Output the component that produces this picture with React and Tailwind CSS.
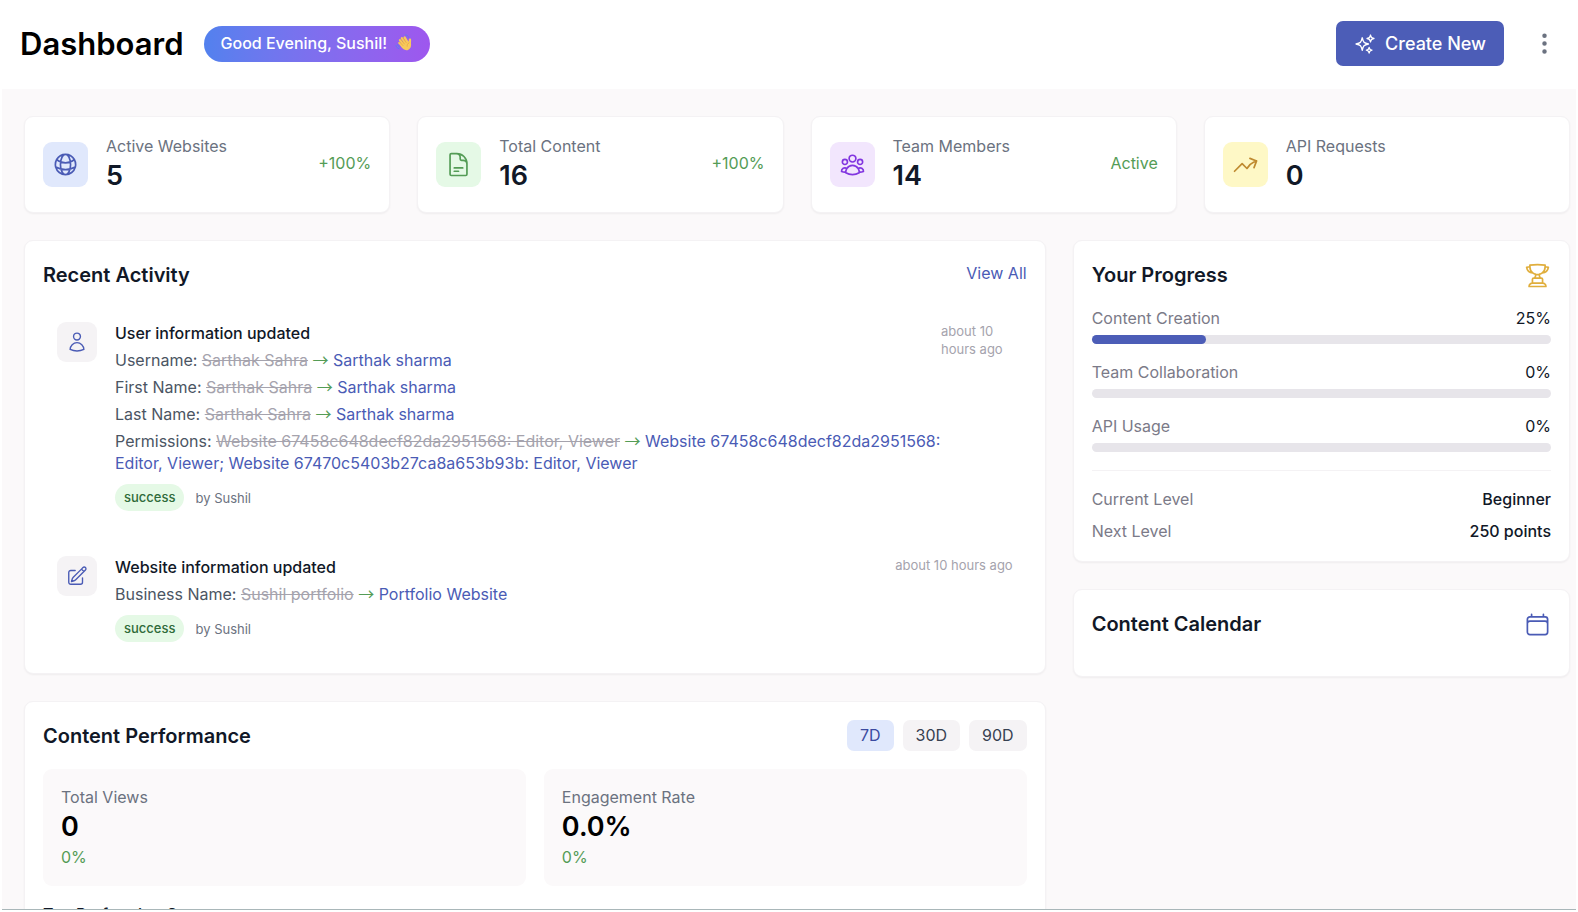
import { EllipsisVertical } from "lucide-react";
import {
  HiOutlineArrowTrendingUp,
  HiOutlineCalendar,
  HiOutlineDocumentText,
  HiOutlineGlobeAlt,
  HiOutlinePencilSquare,
  HiOutlineSparkles,
  HiOutlineTrophy,
  HiOutlineUser,
  HiOutlineUserGroup,
} from "react-icons/hi2";

const CARD = "rounded-[9px] border border-[#f4f2f4] bg-white shadow-xs";
const H2 = "text-[20px] leading-8 font-semibold text-[#111827]";

const stats = [
  { label: "Active Websites", value: "5", note: "+100%", Icon: HiOutlineGlobeAlt, tile: "bg-[#e0e8fc] text-[#4a5bb5]" },
  { label: "Total Content", value: "16", note: "+100%", Icon: HiOutlineDocumentText, tile: "bg-[#e5f9e6] text-[#549c56]" },
  { label: "Team Members", value: "14", note: "Active", Icon: HiOutlineUserGroup, tile: "bg-[#f2e6fd] text-[#8236e0]" },
  { label: "API Requests", value: "0", note: "", Icon: HiOutlineArrowTrendingUp, tile: "bg-[#fef8c6] text-[#bf8a30]" },
];

const activities = [
  {
    title: "User information updated",
    Icon: HiOutlineUser,
    time: "about 10 hours ago",
    changes: [
      ["Username", "Sarthak Sahra", "Sarthak sharma"],
      ["First Name", "Sarthak Sahra", "Sarthak sharma"],
      ["Last Name", "Sarthak Sahra", "Sarthak sharma"],
      [
        "Permissions",
        "Website 67458c648decf82da2951568: Editor, Viewer",
        "Website 67458c648decf82da2951568: Editor, Viewer; Website 67470c5403b27ca8a653b93b: Editor, Viewer",
      ],
    ],
  },
  {
    title: "Website information updated",
    Icon: HiOutlinePencilSquare,
    time: "about 10 hours ago",
    changes: [["Business Name", "Sushil portfolio", "Portfolio Website"]],
  },
];

const progress = [
  { label: "Content Creation", value: 25 },
  { label: "Team Collaboration", value: 0 },
  { label: "API Usage", value: 0 },
];

function WavingHand() {
  return (
    <svg viewBox="0 0 18 18" className="size-[18px]" role="img" aria-label="Waving hand">
      <g stroke="#f7c95c" strokeWidth="2.3" strokeLinecap="round" fill="none">
        <path d="M5 6.2 9 11" />
        <path d="M6.9 4.2 11 9.5" />
        <path d="M9.6 3.4 12.6 8.5" />
        <path d="M4.3 9 8 12.5" />
        <path d="M15 5.6 14.8 10" />
      </g>
      <path d="M6 9.4 11.5 6.6 15.9 8.5C16.6 12 15.6 15 13 15.9 10 16.8 7.600 15 5.400 11.800Z" fill="#f7c95c" />
      <g stroke="#e09a3e" strokeWidth=".6" strokeLinecap="round" fill="none">
        <path d="M6 5.700 9.400 10M8.200 4.300 11.300 8.800M4.800 8.300 8 11.600M14 8.800C12.500 9.600 11.900 10.800 12.200 12.200" />
      </g>
      <g stroke="#5b7df0" strokeWidth="1" strokeLinecap="round" fill="none">
        <path d="M10.500 1C12.300 1 13.400 2 13.800 3.500M1 11.500C1.200 13.300 2.300 14.300 4 14.600M2.600 10.800C2.900 12 3.600 12.700 4.800 13" />
      </g>
    </svg>
  );
}

function StatCard({ label, value, note, Icon, tile }) {
  return (
    <div className={`${CARD} flex h-[97px] items-center gap-[18px] px-[18px]`}>
      <div className={`flex size-[45px] items-center justify-center rounded-[9px] ${tile}`}>
        <Icon className="size-[27px]" />
      </div>
      <div className="flex-1">
        <p className="text-[16px] leading-6 text-[#6b7280]">{label}</p>
        <p className="pb-0.5 text-[27px] leading-9 font-semibold text-[#111827]">{value}</p>
      </div>
      <span className="pb-1 text-[16px] leading-6 text-[#549c56]">{note}</span>
    </div>
  );
}

function Activity({ title, Icon, time, changes }) {
  return (
    <li className="flex items-start gap-[18px] p-[14px]">
      <div className="flex size-10 shrink-0 items-center justify-center rounded-[9px] bg-[#f5f3f5] text-[#4a5bb5]">
        <Icon className="size-[22px]" />
      </div>
      <div className="flex flex-1 items-start justify-between">
        <div className="max-w-[826px] shrink-0">
          <h3 className="text-[16px] leading-[22px] font-medium text-[#111827]">{title}</h3>
          {changes.map(([field, before, after]) => (
            <p key={field} className="mt-[5px] text-[16px] leading-[22px] text-[#4b5563]">
              {field}: <s className="text-[#a5a3ad]">{before}</s>{" "}
              <span className="font-['Noto_Sans_CJK_SC',sans-serif] leading-4 text-[#549c56]">→</span>{" "}
              <span className="text-[#4a5bb5]">{after}</span>
            </p>
          ))}
          <div className="mt-[10px] flex items-center gap-[11px] text-[13px] leading-[18px]">
            <span className="rounded-full bg-[#e5f9e6] px-[9px] pt-1 pb-[5px] font-medium text-[#2f6b3a]">success</span>
            <span className="text-[#6b7280]">by Sushil</span>
          </div>
        </div>
        <time className="text-[13px] leading-[18px] text-[#a5a3ad]">{time}</time>
      </div>
    </li>
  );
}

function Metric({ label, value }) {
  return (
    <div className="rounded-[9px] bg-[#fbf9fa] px-[18px] pt-[17px] pb-[18px]">
      <p className="text-[16px] leading-[22px] text-[#6b7280]">{label}</p>
      <p className="text-[27px] leading-[38px] font-semibold text-black">{value}</p>
      <p className="text-[16px] leading-[22px] text-[#549c56]">0%</p>
    </div>
  );
}

export default function App() {
  return (
    <div className="flex h-screen flex-col overflow-hidden border-x-2 border-white bg-[#fbf9fa] font-[Inter,sans-serif]">
      <header className="flex shrink-0 items-center justify-between bg-white pt-[21px] pr-[18px] pb-[23px] pl-[18px]">
        <div className="flex items-center gap-5">
          <h1 className="text-[31px] leading-[45px] font-semibold text-black">Dashboard</h1>
          <p className="flex h-9 items-center gap-2 rounded-full bg-linear-to-r from-[#5281ee] to-[#9e57ee] px-[17px] pb-0.5 text-[16px] font-medium text-white">
            Good Evening, Sushil! <WavingHand />
          </p>
        </div>
        <div className="flex items-center gap-[27px]">
          <button type="button" className="flex h-[45px] items-center gap-[9px] rounded-[7px] bg-[#4c5db7] px-[18px] text-[18px] font-medium text-white">
            <HiOutlineSparkles className="size-[22px]" />
            Create New
          </button>
          <button type="button" aria-label="More options" className="text-[#6b7280]">
            <EllipsisVertical className="size-[27px]" />
          </button>
        </div>
      </header>

      <main className="flex min-h-0 flex-1 flex-col gap-[27px] overflow-hidden pt-[27px] pr-1.5 pl-[22px]">
        <section className="grid grid-cols-4 gap-[27px]">
          {stats.map((s) => (
            <StatCard key={s.label} {...s} />
          ))}
        </section>

        <div className="grid grid-cols-3 items-start gap-[27px]">
          <div className="col-span-2 flex flex-col gap-[27px]">
            <section className={`${CARD} p-[18px] pb-[17px]`}>
              <div className="flex items-center justify-between">
                <h2 className={H2}>Recent Activity</h2>
                <a href="#activity" className="self-start text-[16px] leading-7 text-[#4a5bb5]">View All</a>
              </div>
              <ul className="mt-[17px] flex flex-col gap-[17px]">
                {activities.map((a) => (
                  <Activity key={a.title} {...a} />
                ))}
              </ul>
            </section>

            <section className={`${CARD} p-[18px]`}>
              <div className="flex items-start justify-between">
                <h2 className={H2}>Content Performance</h2>
                <div className="flex gap-[9px] text-[16px] leading-[22px]">
                  <button type="button" aria-pressed="true" className="rounded-[7px] bg-[#e0e8fc] px-[13px] pt-1 pb-[5px] text-[#3a4aa0]">7D</button>
                  <button type="button" className="rounded-[7px] bg-[#f5f3f5] px-[13px] pt-1 pb-[5px] text-[#374151]">30D</button>
                  <button type="button" className="rounded-[7px] bg-[#f5f3f5] px-[13px] pt-1 pb-[5px] text-[#374151]">90D</button>
                </div>
              </div>
              <div className="mt-[17px] grid grid-cols-2 gap-[18px]">
                <Metric label="Total Views" value="0" />
                <Metric label="Engagement Rate" value="0.0%" />
              </div>
              <h3 className="mt-[17px] text-[16px] leading-[22px] font-medium text-[#111827]">Top Performing Content</h3>
            </section>
          </div>

          <div className="flex flex-col gap-[27px]">
            <section className={`${CARD} p-[18px] pb-[19px]`}>
              <div className="flex items-center justify-between">
                <h2 className={H2}>Your Progress</h2>
                <HiOutlineTrophy className="size-[27px] text-[#e0ae3c]" />
              </div>
              <div className="mt-4 flex flex-col gap-[17px]">
                {progress.map(({ label, value }) => (
                  <div key={label}>
                    <div className="flex justify-between text-[16px] leading-[22px]">
                      <span className="text-[#7b7a88]">{label}</span>
                      <span className="text-[#111827]">{value}%</span>
                    </div>
                    <div role="progressbar" aria-label={label} aria-valuenow={value} className="mt-[6px] h-[9px] rounded-full bg-[#e7e5ea]">
                      <div className="h-full rounded-full bg-[#4c5db7]" style={{ width: `${value}%` }} />
                    </div>
                  </div>
                ))}
              </div>
              <dl className="mt-[18px] flex flex-col gap-[10px] border-t border-[#f4f2f4] pt-[17px] text-[16px] leading-[22px]">
                <div className="flex justify-between">
                  <dt className="text-[#7b7a88]">Current Level</dt>
                  <dd className="font-medium text-[#111827]">Beginner</dd>
                </div>
                <div className="flex justify-between">
                  <dt className="text-[#7b7a88]">Next Level</dt>
                  <dd className="font-medium text-[#111827]">250 points</dd>
                </div>
              </dl>
            </section>

            <section className={`${CARD} p-[18px] pb-9`}>
              <div className="flex items-center justify-between">
                <h2 className={H2}>Content Calendar</h2>
                <HiOutlineCalendar className="size-[27px] text-[#4a5bb5]" />
              </div>
            </section>
          </div>
        </div>
      </main>
      <footer className="shrink-0 border-t border-[#a9b7b9] bg-white pt-0.5" />
    </div>
  );
}
